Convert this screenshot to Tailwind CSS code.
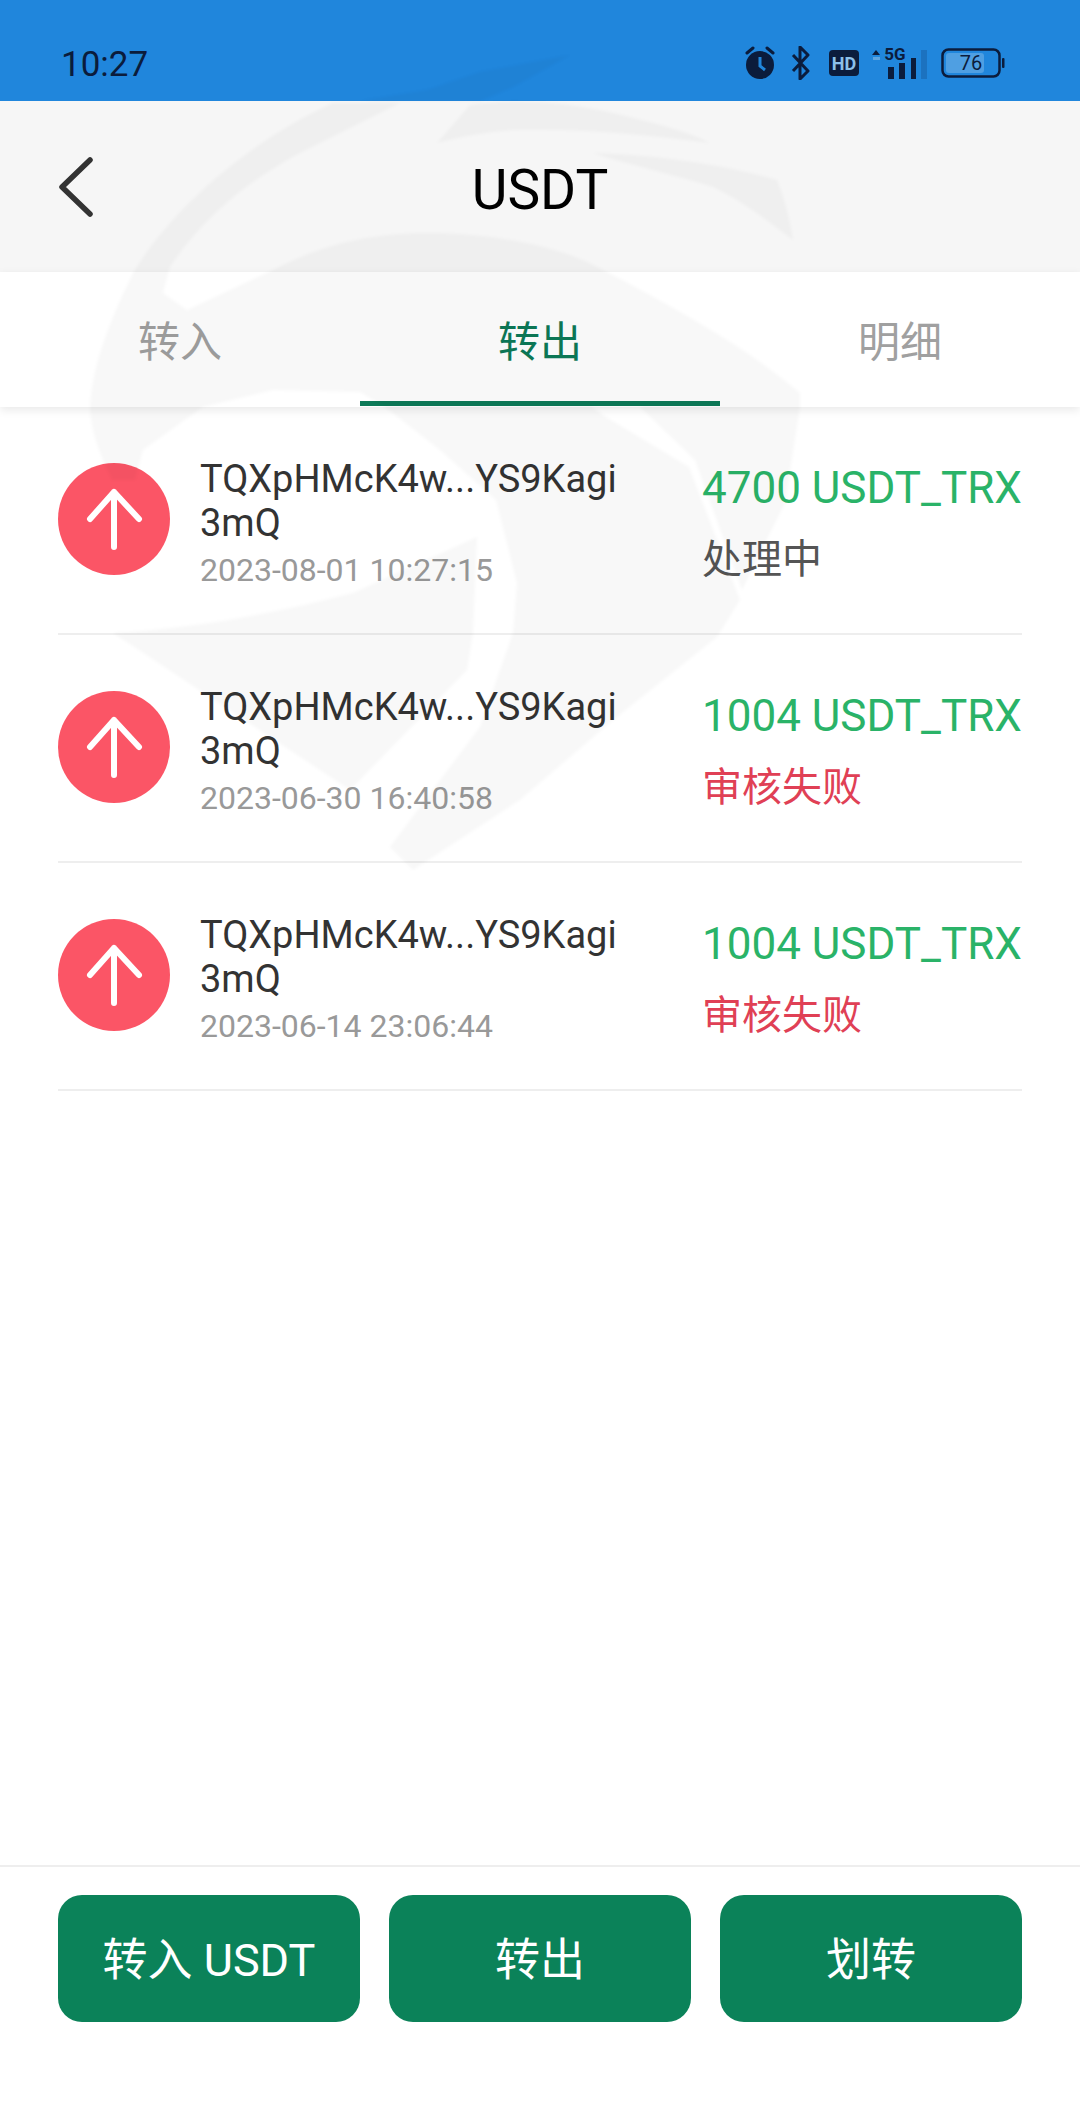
<!DOCTYPE html>
<html lang="zh">
<head>
<meta charset="utf-8">
<script src="https://cdn.jsdelivr.net/npm/@tailwindcss/browser@4"></script>
</head>
<body class="m-0 bg-white">
<div class="relative w-[1080px] h-[2120px] overflow-hidden flex flex-col bg-white font-['Roboto','Noto_Sans_CJK_SC',sans-serif]">

  <!-- status bar -->
  <div class="h-[101px] shrink-0 bg-[#2086dc] flex items-end justify-between pl-[61px] pr-[75px] pb-[16px] text-[#0b1c3c]">
    <span class="text-[35px] leading-[40px]">10:27</span>
    <div class="flex items-center h-[40px] -translate-y-[2px]">
      <svg class="w-[30px] h-[34px]" viewBox="0 0 30 34"><circle cx="15" cy="19" r="14" fill="#0b1c3c"/><path d="M15 11v9l5 4" fill="none" stroke="#2086dc" stroke-width="3"/><path d="M2 7l6-5M28 7l-6-5" stroke="#0b1c3c" stroke-width="3" stroke-linecap="round"/></svg>
      <svg class="w-[20px] h-[34px] ml-[16px]" viewBox="0 0 20 34"><path d="M2 9l15 16-8 8V1l8 8L2 25" fill="none" stroke="#0b1c3c" stroke-width="3" stroke-linejoin="round"/></svg>
      <svg class="w-[30px] h-[26px] ml-[18px]" viewBox="0 0 30 26"><rect width="30" height="26" rx="4" fill="#0b1c3c"/><text x="15" y="19.5" text-anchor="middle" font-size="18" font-weight="700" fill="#8cc0ea" font-family="Roboto">HD</text></svg>
      <svg class="w-[56px] h-[40px] ml-[12px]" viewBox="0 -3 56 40"><path d="M1 9l4-5 4 5z" fill="#0b1c3c"/><path d="M2 11h7v3H2z" fill="#5fa5e0"/><text x="24" y="14" text-anchor="middle" font-size="17" font-weight="700" fill="#0b1c3c" font-family="Roboto">5G</text><path d="M17 21h6v12h-6zM28 17h6v16h-6zM40 12h5v21h-5z" fill="#0b1c3c"/><path d="M50 4h6v29h-6z" fill="#0b1c3c" fill-opacity=".18"/></svg>
      <svg class="w-[64px] h-[30px] ml-[14px]" viewBox="0 0 64 30"><rect x="1.5" y="1.5" width="57" height="27" rx="6" fill="none" stroke="#0b1c3c" stroke-width="2.5"/><rect x="5" y="5" width="38" height="20" rx="3" fill="#4f9fe2"/><text x="30" y="22" text-anchor="middle" font-size="20" fill="#0b1c3c" font-family="Roboto">76</text><rect x="61" y="10" width="2.5" height="10" rx="1" fill="#0b1c3c"/></svg>
    </div>
  </div>

  <!-- header -->
  <div class="relative h-[171px] shrink-0 bg-[#f6f6f6] flex items-center justify-center">
    <svg class="absolute left-[58px] top-[56px] w-[36px] h-[60px]" viewBox="0 0 36 60"><path d="M32 3L4 30l28 27" fill="none" stroke="#333" stroke-width="5.5" stroke-linecap="round" stroke-linejoin="round"/></svg>
    <span class="text-[55px] leading-[64px] text-black pt-[6px]">USDT</span>
  </div>

  <!-- tabs -->
  <div class="relative h-[135px] shrink-0 grid grid-cols-3 bg-white shadow-[0_3px_9px_rgba(0,0,0,0.09)] text-[42px] leading-[56px] text-center">
    <div class="pt-[43px] text-[#a0a0a0]">转入</div>
    <div class="pt-[43px] text-[#0d7a58] border-b-[5px] border-[#0d7a58] mb-[1px]">转出</div>
    <div class="pt-[43px] text-[#a0a0a0]">明细</div>
  </div>

  <!-- list -->
  <div class="flex-1 px-[58px]">
    <div class="h-[228px] flex items-center border-b-2 border-[#eeeeee]">
      <div class="w-[112px] h-[112px] rounded-full bg-[#fb5566] shrink-0 -translate-y-[1px]"><svg class="w-[112px] h-[112px]" viewBox="0 0 112 112"><path d="M56 29v55M32 56l24-27 25 27" fill="none" stroke="#fff" stroke-width="6" stroke-linecap="round" stroke-linejoin="round"/></svg></div>
      <div class="w-[422px] ml-[30px] shrink-0 pt-[8px]">
        <div class="text-[38px] leading-[44px] text-[#333333] break-all">TQXpHMcK4w...YS9Kagi3mQ</div>
        <div class="text-[32px] leading-[44px] text-[#999999] whitespace-nowrap mt-[3px]">2023-08-01 10:27:15</div>
      </div>
      <div class="ml-[80px] whitespace-nowrap pt-[8px]">
        <div class="text-[44px] leading-[56px] text-[#2ab368]">4700 USDT_TRX</div>
        <div class="text-[40px] leading-[56px] text-[#555555] mt-[16px]">处理中</div>
      </div>
    </div>
    <div class="h-[228px] flex items-center border-b-2 border-[#eeeeee]">
      <div class="w-[112px] h-[112px] rounded-full bg-[#fb5566] shrink-0 -translate-y-[1px]"><svg class="w-[112px] h-[112px]" viewBox="0 0 112 112"><path d="M56 29v55M32 56l24-27 25 27" fill="none" stroke="#fff" stroke-width="6" stroke-linecap="round" stroke-linejoin="round"/></svg></div>
      <div class="w-[422px] ml-[30px] shrink-0 pt-[8px]">
        <div class="text-[38px] leading-[44px] text-[#333333] break-all">TQXpHMcK4w...YS9Kagi3mQ</div>
        <div class="text-[32px] leading-[44px] text-[#999999] whitespace-nowrap mt-[3px]">2023-06-30 16:40:58</div>
      </div>
      <div class="ml-[80px] whitespace-nowrap pt-[8px]">
        <div class="text-[44px] leading-[56px] text-[#2ab368]">1004 USDT_TRX</div>
        <div class="text-[40px] leading-[56px] text-[#e04055] mt-[16px]">审核失败</div>
      </div>
    </div>
    <div class="h-[228px] flex items-center border-b-2 border-[#eeeeee]">
      <div class="w-[112px] h-[112px] rounded-full bg-[#fb5566] shrink-0 -translate-y-[1px]"><svg class="w-[112px] h-[112px]" viewBox="0 0 112 112"><path d="M56 29v55M32 56l24-27 25 27" fill="none" stroke="#fff" stroke-width="6" stroke-linecap="round" stroke-linejoin="round"/></svg></div>
      <div class="w-[422px] ml-[30px] shrink-0 pt-[8px]">
        <div class="text-[38px] leading-[44px] text-[#333333] break-all">TQXpHMcK4w...YS9Kagi3mQ</div>
        <div class="text-[32px] leading-[44px] text-[#999999] whitespace-nowrap mt-[3px]">2023-06-14 23:06:44</div>
      </div>
      <div class="ml-[80px] whitespace-nowrap pt-[8px]">
        <div class="text-[44px] leading-[56px] text-[#2ab368]">1004 USDT_TRX</div>
        <div class="text-[40px] leading-[56px] text-[#e04055] mt-[16px]">审核失败</div>
      </div>
    </div>
  </div>

  <!-- bottom actions -->
  <div class="h-[255px] shrink-0 border-t-2 border-[#eeeeee] px-[58px] pt-[28px]">
    <div class="grid grid-cols-3 gap-[29px] text-[45px] text-white">
      <div class="h-[127px] pt-[4px] rounded-[24px] bg-[#0b8259] flex items-center justify-center">转入 USDT</div>
      <div class="h-[127px] pt-[4px] rounded-[24px] bg-[#0b8259] flex items-center justify-center">转出</div>
      <div class="h-[127px] pt-[4px] rounded-[24px] bg-[#0b8259] flex items-center justify-center">划转</div>
    </div>
  </div>

  <!-- watermark -->
  <svg class="absolute left-0 top-0 w-[1080px] h-[900px] pointer-events-none blur-[1.5px]" viewBox="0 0 1080 900">
    <g fill="#000" opacity=".028">
      <path d="M360 101L427 90L480 72L570 55L513 87L480 101Z"/>
      <path d="M333 103C250 140 170 210 133 273C105 330 92 370 90 407C90 430 100 455 112 480L135 480L143 450L203 407L273 390L360 392L385 407L800 407L800 393C750 350 680 310 603 270C560 245 490 233 427 233C370 233 320 245 273 270L187 310L163 293L170 267C205 215 250 180 300 153L400 103Z"/>
      <path d="M437 143L470 105C520 98 570 103 613 113C650 122 685 130 710 143C650 135 580 128 513 130C485 132 460 137 437 143Z"/>
      <path d="M593 153C660 155 725 165 777 180C785 200 790 220 793 240C760 215 740 200 713 187C675 175 630 165 593 153Z"/>
      <path d="M385 407L440 450L496 500L517 583L513 633L480 727L390 847L413 870L520 800L613 720L717 637L740 600L689 467L606 417L592 407Z"/>
      <path d="M640 407L695 460L742 590L785 503L800 407Z"/>
      <path d="M113 633C200 628 280 612 353 593L477 537L473 633L467 670L350 790Z"/>
    </g>
  </svg>
</div>
</body>
</html>
